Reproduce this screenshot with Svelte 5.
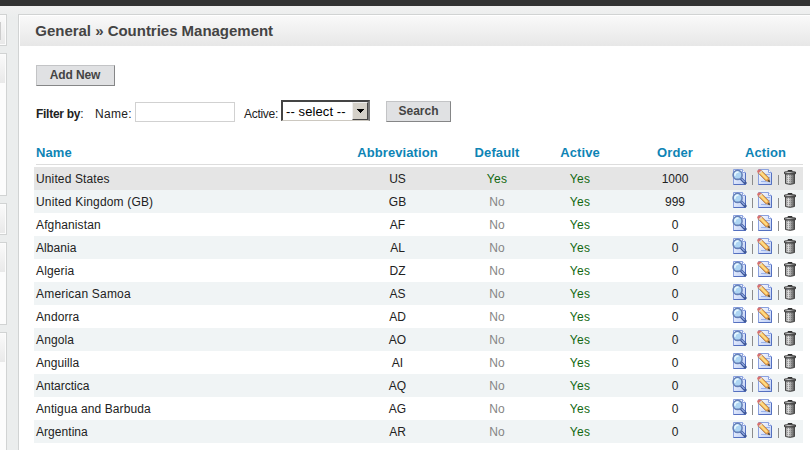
<script>
  const countries = [
    ['United States', 'US', 'Yes', '1000', 0.13],
    ['United Kingdom (GB)', 'GB', 'No', '999', 0.17],
    ['Afghanistan', 'AF', 'No', '0', 0.13],
    ['Albania', 'AL', 'No', '0', 0.08],
    ['Algeria', 'DZ', 'No', '0', 0.13],
    ['American Samoa', 'AS', 'No', '0', 0.2],
    ['Andorra', 'AD', 'No', '0', 0.1],
    ['Angola', 'AO', 'No', '0', 0.13],
    ['Anguilla', 'AI', 'No', '0', 0.08],
    ['Antarctica', 'AQ', 'No', '0', 0],
    ['Antigua and Barbuda', 'AG', 'No', '0', 0.11],
    ['Argentina', 'AR', 'No', '0', 0.05]
  ];
  const sidePanels = [
    { height: 32, kind: 'tab' },
    { height: 143, kind: 'box' },
    { height: 32, kind: 'tab' },
    { height: 83, kind: 'box' },
    { height: 130, kind: 'box' }
  ];
</script>

<div class="page">
  <svg class="defs" width="0" height="0">
    <defs>
      <linearGradient id="paper" x1="0" y1="0" x2="1" y2="1">
        <stop offset="0" stop-color="#fff" /><stop offset="1" stop-color="#b9cbf6" />
      </linearGradient>
      <linearGradient id="metal">
        <stop offset="0" stop-color="#8d8d8d" /><stop offset=".3" stop-color="#e2e2e2" /><stop offset="1" stop-color="#4e4e4e" />
      </linearGradient>
    </defs>
  </svg>
  <div class="topbar"></div>
  <div class="body">
    <aside>
      {#each sidePanels as p, i}
        <div class="side {p.kind}" style="height:{p.height}px">
          <div class="fill">{#if i === 0}<div class="nub"></div>{/if}</div>
        </div>
      {/each}
    </aside>
    <main>
      <h1><span>General » Countries Management</span></h1>
      <div class="content">
        <button class="add">Add New</button>
        <div class="filter">
          <b>Filter by<i>:</i></b>
          <label class="name" for="name">Name:</label>
          <input id="name" type="text" />
          <span class="active">Active:</span>
          <div class="select">
            <span>-- select --</span>
            <div class="drop"><svg width="7" height="4" viewBox="0 0 7 4" shape-rendering="crispEdges"><path d="M0 0h7v1H6v1H5v1H4v1H3V3H2V2H1V1H0z" fill="#000" /></svg></div>
          </div>
          <button class="search">Search</button>
        </div>
        <div class="table">
          <div class="row head">
            <span>Name</span><span>Abbreviation</span><span>Default</span><span>Active</span><span>Order</span><span>Action</span>
          </div>
          {#each countries as c, i}
            <div class="row" class:hover={i === 0} class:alt={i % 2 === 1}>
              <span style="letter-spacing:{c[4]}px">{c[0]}</span>
              <span>{c[1]}</span>
              <span class:yes={c[2] === 'Yes'} class:no={c[2] === 'No'}>{c[2]}</span>
              <span class="yes">Yes</span>
              <span class="order">{c[3]}</span>
              <div class="actions">
                <svg width="16" height="16" viewBox="0 0 16 16">
                  <path d="M2.5.5h9l3 3v12h-12z" fill="url(#paper)" stroke="#8ba1df" />
                  <path d="M14.5 4v11.5h-12" fill="none" stroke="#5570bf" />
                  <path d="M11.5.5v3h3" fill="#fff" stroke="#8ba1df" />
                  <path d="M10 9.5l4.2 4.5" stroke="#3d5697" stroke-width="3" stroke-linecap="round" />
                  <path d="M10.4 9.6l3.2 3.4" stroke="#92abe5" stroke-width="1.1" />
                  <circle cx="6.6" cy="5.9" r="4.5" fill="#aed5f3" stroke="#6580b8" stroke-width="1.6" />
                  <path d="M4.1 6.7a2.7 2.7 0 0 1 3.5-3.4" fill="none" stroke="#e7f8ff" stroke-width="1.7" />
                </svg>
                <i class="sep"></i>
                <svg width="16" height="16" viewBox="0 0 16 16">
                  <path d="M1.5.5h10l3 3v12h-13z" fill="url(#paper)" stroke="#8ba1df" />
                  <path d="M14.5 4v11.5h-13" fill="none" stroke="#5570bf" />
                  <path d="M11.5.5v3h3" fill="#fff" stroke="#8ba1df" />
                  <path d="M8 5.5h5M10 8.5h3M4 12.5h5" stroke="#9bb2eb" />
                  <path d="M.8 3.8L4 .9l7.9 7.9.8 4-3.9-1z" fill="#e8a04d" stroke="#966b43" stroke-width=".6" />
                  <path d="M3.6 3.4l6.5 6.6" stroke="#ffdc82" stroke-width="2.3" />
                  <path d="M0 2.2Q.8.2 2.8.2l1.7 1.6-2.9 2.7z" fill="#d8716f" />
                  <path d="M2 4.5l2.8-2.7" stroke="#ddd" stroke-width="1.1" />
                  <path d="M11.2 11.3l1.5 1.5" stroke="#444" stroke-width="1.4" />
                </svg>
                <i class="sep"></i>
                <svg class="bin" width="12" height="15" viewBox="0 0 12 15">
                  <path d="M1.5 4h9v9.5q-4.5 1.7-9 0z" fill="url(#metal)" stroke="#484848" />
                  <path d="M3.5 5v9M5.5 5v9M7.5 5v9M9.5 5v8" stroke="#555" stroke-opacity=".55" stroke-width=".8" stroke-dasharray="1 1" />
                  <path d="M4 1.5V.5h4v1" fill="none" stroke="#333" />
                  <path d="M.5 2Q6 .9 11.5 2v1.7H.5z" fill="url(#metal)" stroke="#333" stroke-width=".9" />
                </svg>
              </div>
            </div>
          {/each}
        </div>
      </div>
    </main>
  </div>
</div>

<style>
  :global(body) { margin: 0; overflow: hidden; }
  * { box-sizing: border-box; }
  .page { width: 810px; height: 450px; overflow: hidden; background: #ebeded; font: 12px "Liberation Sans", Arial, sans-serif; color: #222; }
  .defs { display: block; }
  .topbar { height: 6px; background: #333; }
  .body { display: flex; height: 444px; padding-top: 8px; background: linear-gradient(#f1f1f1, #ebeded 12px); }
  aside { width: 18px; flex: none; display: flex; flex-direction: column; gap: 7px; }
  .side { width: 7px; flex: none; border: 1px solid #d1d3d3; border-left: 0; background: #fcfcfc; padding: 1px 1px 1px 0; }
  .fill { height: 28px; background: linear-gradient(#fafafa, #e9e9e9); }
  .tab .fill { height: 100%; padding-top: 6px; }
  .nub { width: 1px; height: 18px; background: #ccc; }
  main { flex: 1; height: 440px; border: 1px solid #d1d3d3; border-right: 0; border-bottom: 0; background: #fff; padding: 1px 0 0 1px; }
  h1 { margin: 0; height: 30px; background: linear-gradient(#f9f9f9, #e7e7e7); padding-left: 15.3px; font-size: 15px; line-height: 30px; font-weight: bold; color: #444; white-space: nowrap; letter-spacing: -.02px; }
  .content { padding: 19px 0 0 14px; }
  button { display: block; height: 21px; padding: 0 0 1px; font: bold 12px/18px "Liberation Sans", Arial, sans-serif; color: #444; background: #e0e1e3; border: 1px solid; border-color: #c3c4c6 #858687 #858687 #c3c4c6; border-radius: 0; }
  .add { width: 79px; margin-left: 2px; padding-right: 1px; letter-spacing: -.1px; }
  .filter { display: flex; height: 22px; margin: 14px 0 0 2px; white-space: nowrap; line-height: 28px; }
  .filter b { width: 59px; letter-spacing: -.27px; }
  .filter b i { font-weight: normal; font-style: normal; }
  .name { width: 40px; letter-spacing: .3px; }
  input { width: 100px; height: 20px; margin-top: 2px; border: 1px solid #d1d1d1; padding: 0; background: #fff; }
  .active { width: 37px; margin-left: 9px; letter-spacing: -.3px; }
  .select { display: flex; justify-content: space-between; width: 89px; height: 21px; border: 2px solid; border-color: #444 #777 #ccc8c0 #444; border-bottom-width: 1px; background: #fff; font-size: 13px; line-height: 20px; padding-left: 3px; color: #000; letter-spacing: .1px; }
  .drop { width: 16px; height: 18px; flex: none; background: #d4d0c8; border: 1px solid; border-color: #eee #444 #444 #eee; display: flex; align-items: center; justify-content: center; }
  .search { width: 65px; margin: 1px 0 0 16px; }
  .table { margin-top: 21px; width: 769px; }
  .row { display: grid; grid-template-columns: 305px 117px 82px 84px 106px 75px; height: 23px; line-height: 24px; text-align: center; white-space: nowrap; }
  .row > span:first-child { text-align: left; padding-left: 2px; }
  .row > .yes { letter-spacing: .35px; }
  .row > .no { letter-spacing: .15px; }
  .head { height: 22px; line-height: 19px; font-size: 13px; font-weight: bold; color: #0e84b5; margin: 0 0 2px; letter-spacing: .1px; background: linear-gradient(#ddd, #ddd) 2px 21px / 767px 1px no-repeat; }
  .alt { background: #f0f4f5; }
  .hover { background: #e5e5e5; }
  .yes { color: #12680f; }
  .no { color: #858585; }
  .actions { display: flex; padding: 2px 0 0 3px; }
  .actions svg { flex: none; }
  .sep { width: 1px; height: 10px; flex: none; background: #8b8b8b; margin: 6px 4px 0 5px; }
  .sep + svg { margin-left: 0; }
  .sep:nth-of-type(2) { margin-left: 5px; }
  .actions .bin { margin: 1px 0 0 1px; }
</style>
